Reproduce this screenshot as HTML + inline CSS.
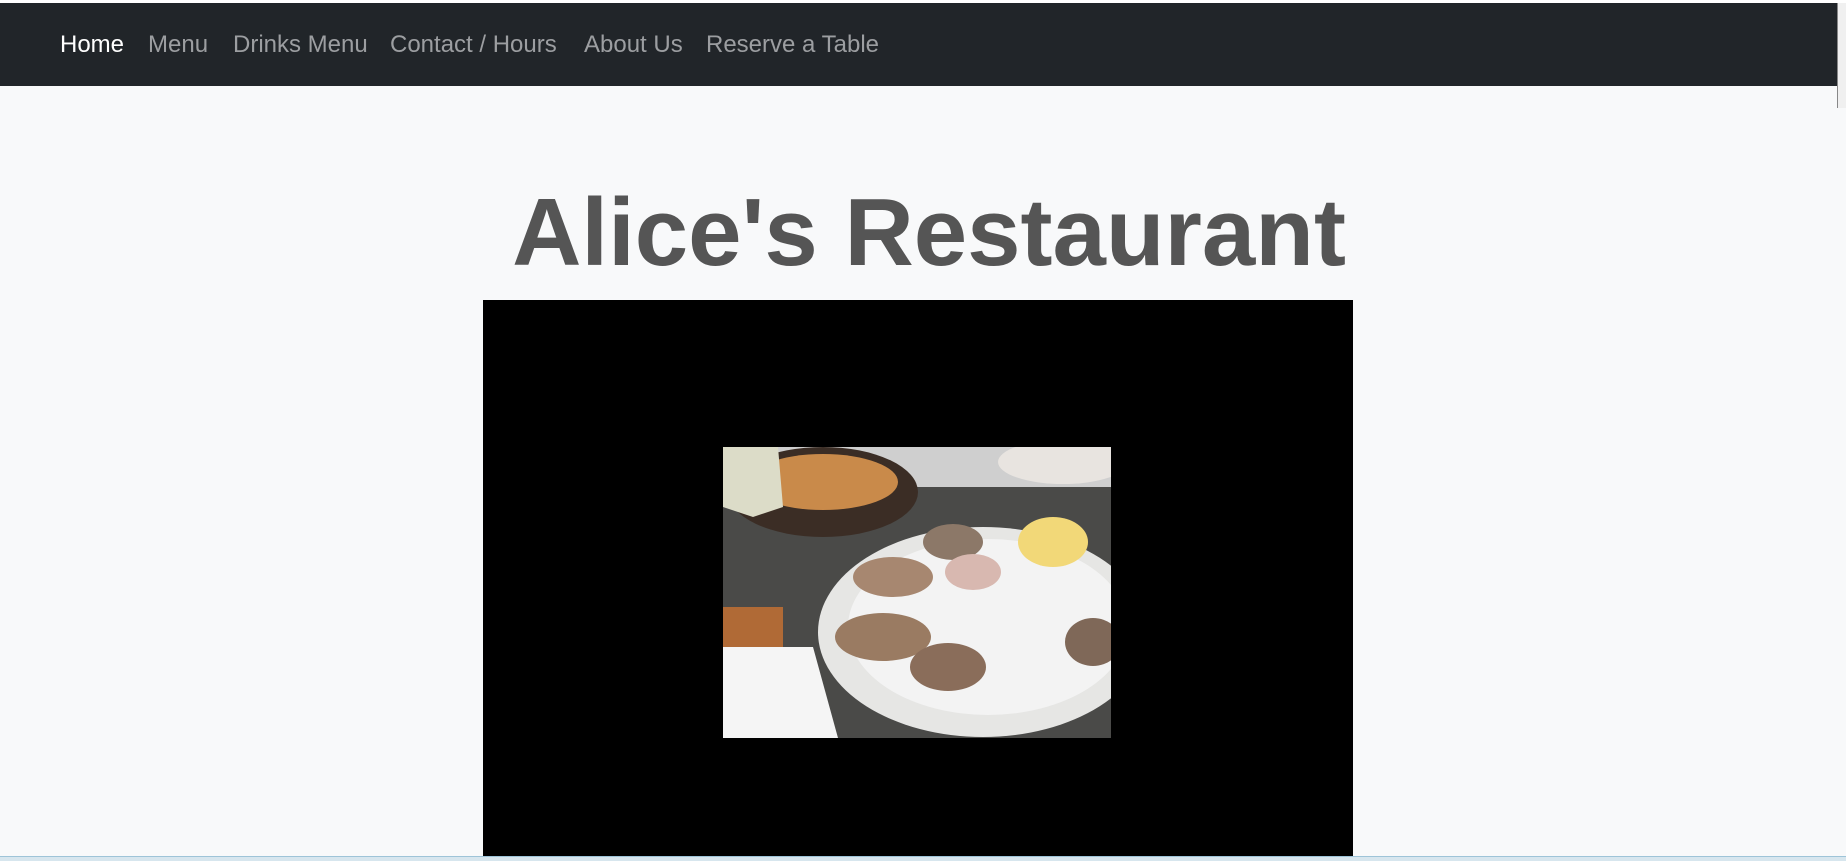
<!DOCTYPE html>
<html><head><meta charset="utf-8"><style>
html,body{margin:0;padding:0;width:1846px;height:861px;overflow:hidden;background:#f8f9fa;font-family:"Liberation Sans",Arial,sans-serif;position:relative}
.top{position:absolute;left:0;top:0;width:1846px;height:3px;background:#fff}
.nav{position:absolute;left:0;top:3px;width:1846px;height:83px;background:#212529}
.nav a{position:absolute;top:28px;font-size:24px;color:#9c9ea1;text-decoration:none;white-space:nowrap}
.nav a.act{color:#fff}
h1{position:absolute;left:0;width:1846px;top:178px;margin:0;text-align:center;font-size:96px;font-weight:bold;color:#555;line-height:110px}
h1 span{position:relative;left:6px}
.box{position:absolute;left:483px;top:300px;width:870px;height:556px;background:#000}
.img{position:absolute;left:723px;top:447px;width:388px;height:291px;overflow:hidden;background:#3a3a3a}
.bot{position:absolute;left:0;top:856px;width:1846px;height:5px;background:#d7e6ee;border-top:1px solid #9ec4d8}
.sb{position:absolute;right:0;top:3px;width:8px;height:105px;border-left:1px solid #888;background:#f0f0f0}
</style></head><body>
<div class="top"></div>
<div class="nav">
<a class="act" style="left:60px">Home</a>
<a style="left:148px">Menu</a>
<a style="left:233px">Drinks Menu</a>
<a style="left:390px">Contact / Hours</a>
<a style="left:584px">About Us</a>
<a style="left:706px">Reserve a Table</a>
</div>
<div class="sb"></div>
<h1><span>Alice's Restaurant</span></h1>
<div class="box"></div>
<div class="img">
<svg width="388" height="291" viewBox="0 0 388 291">
<rect width="388" height="291" fill="#4a4a48"/>
<rect x="0" y="0" width="388" height="40" fill="#cfcfcf"/>
<ellipse cx="100" cy="45" rx="95" ry="45" fill="#3b2d25"/>
<ellipse cx="100" cy="35" rx="75" ry="28" fill="#c98a4a"/>
<ellipse cx="340" cy="15" rx="65" ry="22" fill="#e8e4e0"/>
<ellipse cx="260" cy="185" rx="165" ry="105" fill="#e6e6e4"/>
<ellipse cx="265" cy="180" rx="140" ry="88" fill="#f3f3f3"/>
<ellipse cx="170" cy="130" rx="40" ry="20" fill="#a78770"/>
<ellipse cx="160" cy="190" rx="48" ry="24" fill="#9a7b62"/>
<ellipse cx="225" cy="220" rx="38" ry="24" fill="#8a6d5a"/>
<ellipse cx="230" cy="95" rx="30" ry="18" fill="#8c7868"/>
<ellipse cx="370" cy="195" rx="28" ry="24" fill="#7f6858"/>
<ellipse cx="250" cy="125" rx="28" ry="18" fill="#d8b8b0"/>
<ellipse cx="330" cy="95" rx="35" ry="25" fill="#f2d878"/>
<rect x="0" y="160" width="60" height="45" fill="#b06a36"/>
<path d="M0 200 L90 200 L115 291 L0 291 Z" fill="#f5f5f5"/>
<path d="M0 0 L55 0 L60 60 L30 70 L0 60 Z" fill="#dcdcc8"/>
</svg>
</div>
<div class="bot"></div>
</body></html>
